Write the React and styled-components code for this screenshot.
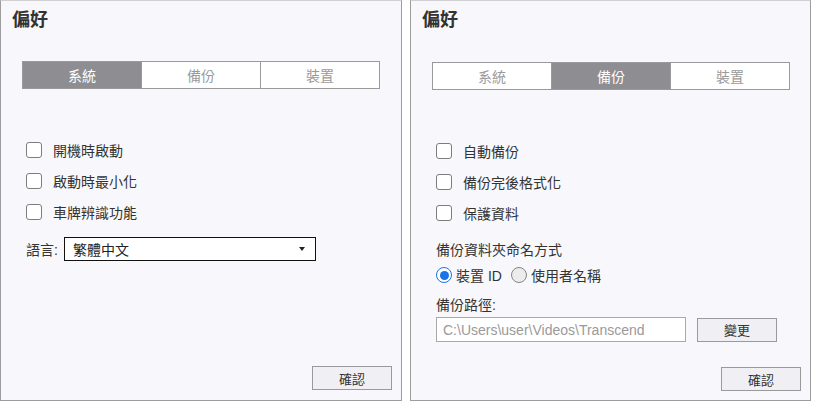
import styled, { createGlobalStyle } from "styled-components";

const GlobalStyle = createGlobalStyle`
  html, body {
    margin: 0;
    padding: 0;
    background: #ffffff;
  }
  body {
    font-family: "Liberation Sans", "Noto Sans CJK TC", sans-serif;
    color: #333;
  }
`;

const Page = styled.div`
  display: flex;
  gap: 8px;
  width: 813px;
  height: 401px;
`;

const Panel = styled.section`
  box-sizing: border-box;
  width: ${({ $width }) => $width}px;
  height: 401px;
  background: #f8f8fc;
  border: 1px solid #9c9c9c;
  border-top-color: #cfcfd4;
  display: flex;
  flex-direction: column;
  padding: 0 9px 0 21px;
`;

const Title = styled.h1`
  margin: 7px 0 0 -10px;
  font-size: 18px;
  line-height: 24px;
  font-weight: bold;
  color: #333;
`;

const Tabs = styled.div`
  display: flex;
  width: 358px;
  height: 28px;
  margin-top: ${({ $top }) => $top}px;
  box-sizing: border-box;
  border: 1px solid #9a9a9a;
`;

const Tab = styled.div`
  flex: 1;
  display: flex;
  align-items: center;
  justify-content: center;
  font-size: 14px;
  color: ${({ $active }) => ($active ? "#ffffff" : "#9a9a9a")};
  background: ${({ $active }) => ($active ? "#8e8d92" : "#ffffff")};
  & + & {
    border-left: 1px solid #9a9a9a;
  }
`;

const Options = styled.div`
  margin-top: ${({ $top }) => $top}px;
  display: flex;
  flex-direction: column;
  padding-left: 4px;
`;

const CheckRow = styled.label`
  display: flex;
  align-items: center;
  height: 31px;
  font-size: 14px;
  color: #333;
`;

const Box = styled.span`
  box-sizing: border-box;
  flex: none;
  width: 16px;
  height: 16px;
  border: 1px solid #7d7d7d;
  border-radius: 3px;
  background: #fff;
  margin-right: 11px;
`;

const LangRow = styled.div`
  display: flex;
  align-items: center;
  margin-top: 10px;
  padding-left: 4px;
  font-size: 14px;
`;

const Select = styled.div`
  box-sizing: border-box;
  width: 252px;
  height: 24px;
  margin-left: 6px;
  border: 1px solid #111;
  background: #fff;
  display: flex;
  align-items: center;
  padding: 0 10px 0 8px;
  font-size: 14px;
  color: #222;
  justify-content: space-between;
`;

const Caret = styled.span`
  width: 0;
  height: 0;
  border-left: 3.5px solid transparent;
  border-right: 3.5px solid transparent;
  border-top: 4px solid #222;
`;

const Label = styled.div`
  font-size: 14px;
  line-height: 20px;
  color: #333;
  padding-left: 4px;
  margin-top: ${({ $top }) => $top}px;
`;

const RadioRow = styled.div`
  display: flex;
  align-items: center;
  height: 22px;
  margin-top: 4px;
  padding-left: 4px;
  font-size: 14px;
  color: #333;
`;

const Radio = styled.span`
  box-sizing: border-box;
  flex: none;
  width: 16px;
  height: 16px;
  border-radius: 50%;
  border: 1.5px solid ${({ $checked }) => ($checked ? "#1a73e8" : "#858585")};
  background: ${({ $checked }) => ($checked ? "#fff" : "#ececec")};
  display: flex;
  align-items: center;
  justify-content: center;
  margin-right: 4px;
  &::after {
    content: "";
    display: ${({ $checked }) => ($checked ? "block" : "none")};
    width: 9px;
    height: 9px;
    border-radius: 50%;
    background: #1a73e8;
  }
`;

const RadioText = styled.span`
  margin-right: 9px;
`;

const PathRow = styled.div`
  display: flex;
  align-items: center;
  gap: 11px;
  margin-top: 2px;
  padding-left: 4px;
`;

const PathInput = styled.div`
  box-sizing: border-box;
  width: 250px;
  height: 25px;
  border: 1px solid #a9a9a9;
  background: #fff;
  display: flex;
  align-items: center;
  padding-left: 6px;
  font-size: 14px;
  color: #9a9a9a;
`;

const Button = styled.button`
  box-sizing: border-box;
  width: 80px;
  height: 24px;
  border: 1px solid #9a9a9a;
  background: #f0f0f4;
  font-family: inherit;
  font-size: 13px;
  color: #333;
  padding: 0;
`;

const Footer = styled.div`
  margin-top: auto;
  margin-bottom: ${({ $bottom }) => $bottom}px;
  display: flex;
  justify-content: flex-end;
`;

const Check = ({ children }) => (
  <CheckRow>
    <Box />
    {children}
  </CheckRow>
);

const TabBar = ({ active, top }) => (
  <Tabs $top={top}>
    {["系統", "備份", "裝置"].map((t) => (
      <Tab key={t} $active={t === active}>
        {t}
      </Tab>
    ))}
  </Tabs>
);

export default function App() {
  return (
    <>
      <GlobalStyle />
      <Page>
        <Panel $width={402}>
          <Title>偏好</Title>
          <TabBar active="系統" top={29} />
          <Options $top={45}>
            <Check>開機時啟動</Check>
            <Check>啟動時最小化</Check>
            <Check>車牌辨識功能</Check>
          </Options>
          <LangRow>
            語言:
            <Select>
              繁體中文
              <Caret />
            </Select>
          </LangRow>
          <Footer $bottom={10}>
            <Button>確認</Button>
          </Footer>
        </Panel>
        <Panel $width={401}>
          <Title>偏好</Title>
          <TabBar active="備份" top={30} />
          <Options $top={45}>
            <Check>自動備份</Check>
            <Check>備份完後格式化</Check>
            <Check>保護資料</Check>
          </Options>
          <Label $top={12}>備份資料夾命名方式</Label>
          <RadioRow>
            <Radio $checked />
            <RadioText>裝置 ID</RadioText>
            <Radio />
            <RadioText>使用者名稱</RadioText>
          </RadioRow>
          <Label $top={9}>備份路徑:</Label>
          <PathRow>
            <PathInput>C:\Users\user\Videos\Transcend</PathInput>
            <Button>變更</Button>
          </PathRow>
          <Footer $bottom={9}>
            <Button>確認</Button>
          </Footer>
        </Panel>
      </Page>
    </>
  );
}
